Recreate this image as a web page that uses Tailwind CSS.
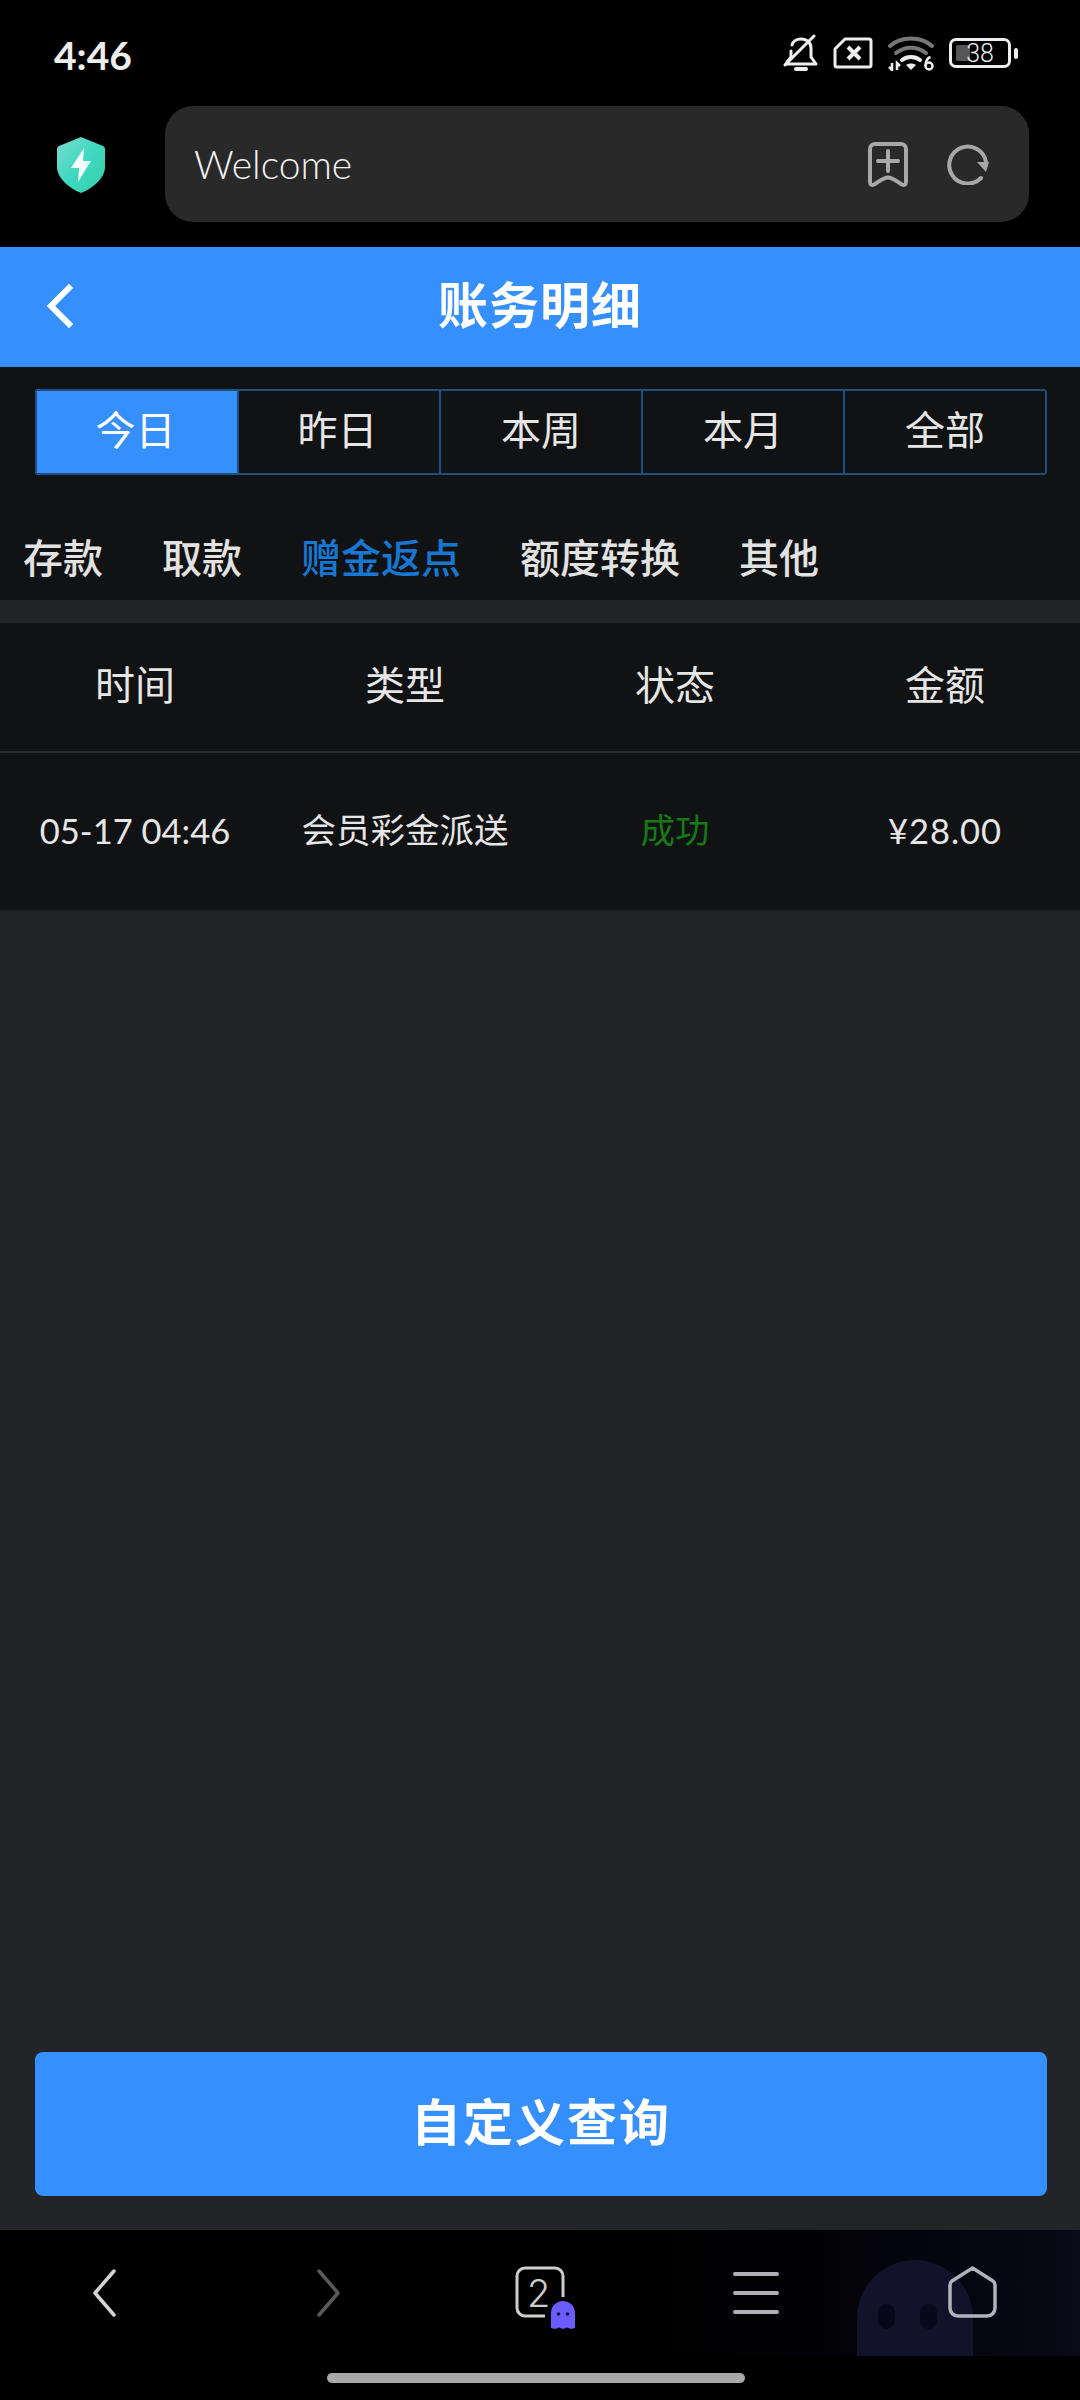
<!DOCTYPE html>
<html lang="zh-CN">
<head>
  <meta charset="utf-8"/>
  <meta content="width=device-width, initial-scale=1" name="viewport"/>
  <title>账务明细</title>
  <script src="https://cdn.jsdelivr.net/npm/@tailwindcss/browser@4"></script>
</head>
<body class="bg-black">
  <div class="w-[1080px] h-[2400px] flex flex-col overflow-hidden bg-black font-['Roboto','Noto_Sans_CJK_SC',sans-serif]">

    <!-- Status bar -->
    <div class="h-[106px] shrink-0 flex items-start justify-between pl-[54px] pr-[62px] pt-[32px]">
      <span class="text-[39px] leading-[46px] font-bold text-[#eeeeee] font-['Lato','Noto_Sans_CJK_SC',sans-serif]">4:46</span>
      <div class="flex items-center gap-[15px] pt-[2px]">
        <svg width="35" height="38" viewBox="0 0 35 38" fill="none" stroke="#eee" stroke-width="3" stroke-linecap="round" stroke-linejoin="round">
          <path d="M3 30h30l-5-7V14c0-5-4-9-10-9-4 0-8 2-9 6M8 17v6l-4 5"/><path d="M31 2 2 31"/><path d="M13 35h10" stroke-width="4"/>
        </svg>
        <svg width="40" height="32" viewBox="0 0 40 32" fill="none" stroke="#eee" stroke-width="3" stroke-linejoin="round">
          <path d="M12 2h24a2 2 0 0 1 2 2v24a2 2 0 0 1-2 2H4a2 2 0 0 1-2-2V12z"/><path d="m15 10 12 12M27 10 15 22" stroke-width="4"/>
        </svg>
        <svg width="46" height="36" viewBox="0 0 46 36" fill="none">
          <path d="M2 11C13 1 33 1 44 11" stroke="#777" stroke-width="4" stroke-linecap="round"/>
          <path d="M8 18c9-7 21-7 30 0" stroke="#777" stroke-width="4" stroke-linecap="round"/>
          <path d="M14 25c5-4 13-4 18 0" stroke="#eee" stroke-width="4" stroke-linecap="round"/>
          <path d="m23 35-5-5c3-2 7-2 10 0z" fill="#eee"/>
          <path d="M4 28v7l-3-3M9 35v-7l3 3" stroke="#eee" stroke-width="2.500"/>
          <circle cx="41" cy="31" r="3.500" stroke="#eee" stroke-width="2.500"/><path d="M37.500 31c0-5 2-8 5-9" stroke="#eee" stroke-width="2.500"/>
        </svg>
        <div class="flex items-center gap-[3px]">
          <div class="relative w-[62px] h-[30px] rounded-[7px] border-[3px] border-[#eeeeee] overflow-hidden">
            <div class="absolute left-[4px] top-[4px] bottom-[4px] w-[14px] bg-[#555555] rounded-[2px]"></div>
            <span class="absolute inset-0 flex items-center justify-center text-[25px] leading-none font-light text-[#eeeeee]">38</span>
          </div>
          <div class="w-[4px] h-[11px] rounded-full bg-[#eeeeee]"></div>
        </div>
      </div>
    </div>

    <!-- Browser toolbar -->
    <div class="h-[141px] shrink-0 flex items-start pl-[57px] pr-[51px]">
      <svg width="48" height="56" viewBox="0 0 48 56" class="mt-[31px] shrink-0">
        <defs>
          <linearGradient id="sh" x1="0" y1="0" x2="1" y2="1"><stop offset="0" stop-color="#7adcd0"/><stop offset="0.5" stop-color="#3fd8c0"/><stop offset="1" stop-color="#36cfa8"/></linearGradient>
        </defs>
        <path d="M24 0 46 9c1 .5 2 1.500 2 3v18c0 11-12 21-24 26C12 51 0 41 0 30V12c0-1.500 1-2.500 2-3z" fill="url(#sh)"/>
        <path d="M27 11 14 31h8l-1 14 13-21h-8z" fill="#f4fffc"/>
      </svg>
      <div class="ml-[60px] flex-1 h-[116px] rounded-[28px] bg-[#292929] flex items-center pl-[29px] pr-[40px]">
        <span class="flex-1 text-[39px] leading-[44px] font-light text-[#f2f2f2] font-['Lato',sans-serif]">Welcome</span>
        <svg width="40" height="45" viewBox="0 0 40 45" fill="none" stroke="#a8a8a8" stroke-width="4" stroke-linejoin="round" stroke-linecap="round">
          <path d="M7 2h26a5 5 0 0 1 5 5v33c0 3-2 3.500-4 2.500-4-2-9-7-14-7s-10 5-14 7c-2 1-4 .5-4-2.500V7a5 5 0 0 1 5-5z"/><path d="M20 9v20M10 19h20"/>
        </svg>
        <svg width="42" height="42" viewBox="0 0 42 42" fill="none" class="ml-[39px]">
          <path d="M39 19A18.500 18.500 0 1 0 34 35" stroke="#a8a8a8" stroke-width="4" stroke-linecap="round"/>
          <path d="M30 19h12l-3 10z" fill="#a8a8a8"/>
        </svg>
      </div>
    </div>

    <!-- Title bar -->
    <div class="relative h-[120px] shrink-0 bg-[#3590fe] flex items-center justify-center">
      <svg width="30" height="48" viewBox="0 0 30 48" fill="none" stroke="#fff" stroke-width="6" stroke-linecap="square" class="absolute left-[44px] top-[35px]">
        <path d="M25 6 7 24l18 18"/>
      </svg>
      <span class="text-[50px] leading-[60px] font-bold text-white tracking-[1px]">账务明细</span>
    </div>

    <!-- Date tabs and type filter -->
    <div class="h-[233px] shrink-0 bg-[#111213] pl-[35px] pr-[33px] pt-[22px]">
      <div class="grid grid-cols-[202px_202px_202px_202px_204px] h-[86px] rounded-[4px] overflow-hidden">
        <div class="bg-[#3590fe] border-2 border-r-0 border-[#1d5186] pr-[3px] flex items-center justify-center text-[40px] text-white">今日</div>
        <div class="border-y-2 border-l-2 border-[#1d5186] pr-[3px] flex items-center justify-center text-[40px] text-[#e6e6e6]">昨日</div>
        <div class="border-y-2 border-l-2 border-[#1d5186] flex items-center justify-center text-[40px] text-[#e6e6e6]">本周</div>
        <div class="border-y-2 border-l-2 border-[#1d5186] flex items-center justify-center text-[40px] text-[#e6e6e6]">本月</div>
        <div class="border-2 border-[#1d5186] flex items-center justify-center text-[40px] text-[#e6e6e6]">全部</div>
      </div>
      <div class="-ml-[35px] mt-[61px] pl-[23px] flex gap-[59px] text-[40px] leading-[48px] font-medium text-[#e2e2e2]">
        <span>存款</span>
        <span>取款</span>
        <span class="text-[#1678d2]">赠金返点</span>
        <span>额度转换</span>
        <span>其他</span>
      </div>
    </div>

    <!-- Records -->
    <div class="flex-1 bg-[#222427] pt-[23px] flex flex-col">
      <div class="bg-[#111213] border-b-2 border-[#1b1c1e]">
        <div class="grid grid-cols-4 h-[130px] items-center text-center text-[40px] text-[#e6e6e6] border-b-2 border-[#2a2b2d]">
          <span>时间</span><span>类型</span><span>状态</span><span>金额</span>
        </div>
        <div class="grid grid-cols-4 h-[156px] items-center text-center text-[34.5px] text-[#e6e6e6]">
          <span class="font-['Lato',sans-serif]">05-17 04:46</span>
          <span class="pt-[2px]">会员彩金派送</span>
          <span class="pt-[2px] text-[#157a15]">成功</span>
          <span class="font-['Lato',sans-serif] tracking-[1px]">¥28.00</span>
        </div>
      </div>
      <div class="mt-auto mb-[34px] ml-[35px] mr-[33px] h-[144px] rounded-[8px] bg-[#3590fe] flex items-center justify-center text-[50px] font-bold text-white tracking-[2px]">自定义查询</div>
    </div>

    <!-- Browser bottom bar -->
    <div class="relative h-[170px] shrink-0 bg-black">
      <div class="absolute left-0 right-0 top-0 h-[126px] bg-gradient-to-r from-black from-40% to-[#0a0a18] overflow-hidden">
        <div class="absolute left-[857px] top-[30px] w-[116px] h-[110px] rounded-t-[58px] bg-[#12122a]">
          <div class="absolute left-[21px] top-[44px] w-[17px] h-[25px] rounded-full bg-[#08081a]"></div>
          <div class="absolute left-[63px] top-[44px] w-[17px] h-[25px] rounded-full bg-[#08081a]"></div>
        </div>
      </div>
      <svg width="26" height="50" viewBox="0 0 26 50" fill="none" stroke="#d4d4d4" stroke-width="3.500" stroke-linecap="round" stroke-linejoin="round" class="absolute left-[92px] top-[38px]">
        <path d="M22 3 3 25l19 22"/>
      </svg>
      <svg width="26" height="50" viewBox="0 0 26 50" fill="none" stroke="#5a5a5a" stroke-width="3.500" stroke-linecap="round" stroke-linejoin="round" class="absolute left-[315px] top-[38px]">
        <path d="m4 3 19 22L4 47"/>
      </svg>
      <div class="absolute left-[515px] top-[36px] w-[50px] h-[52px]">
        <svg width="50" height="52" viewBox="0 0 50 52" fill="none" stroke="#cccccc" stroke-width="3">
          <path d="M30 50H10a8 8 0 0 1-8-8V10a8 8 0 0 1 8-8h30a8 8 0 0 1 8 8v21"/>
        </svg>
        <span class="absolute left-[12px] top-[8px] text-[38px] leading-[38px] font-light text-[#cccccc] font-['Inter',sans-serif]">2</span>
      </div>
      <svg width="24" height="28" viewBox="0 0 24 28" class="absolute left-[551px] top-[71px]">
        <path d="M0 12a12 12 0 0 1 24 0v15l-4 1-4-1.500-4 1.500-4-1.500L4 28l-4-1z" fill="#6a5cff"/>
        <circle cx="7.500" cy="13" r="1.800" fill="#14123a"/><circle cx="16.500" cy="13" r="1.800" fill="#14123a"/>
      </svg>
      <div class="absolute left-[733px] top-[42px] w-[46px] flex flex-col gap-[15px]">
        <div class="h-[4px] rounded-full bg-[#aeaeb4]"></div>
        <div class="h-[4px] rounded-full bg-[#aeaeb4]"></div>
        <div class="h-[4px] rounded-full bg-[#aeaeb4]"></div>
      </div>
      <svg width="49" height="52" viewBox="0 0 49 52" fill="none" stroke="#b2b2ba" stroke-width="3.500" stroke-linejoin="round" class="absolute left-[948px] top-[36px]">
        <path d="M24.500 2 45 15c1 .8 2 2 2 4v23a8 8 0 0 1-8 8H10a8 8 0 0 1-8-8V19c0-2 1-3.200 2-4z"/>
      </svg>
      <div class="absolute left-[327px] top-[143px] w-[418px] h-[10px] rounded-full bg-[#a8a8a8]"></div>
    </div>
  </div>
</body>
</html>
